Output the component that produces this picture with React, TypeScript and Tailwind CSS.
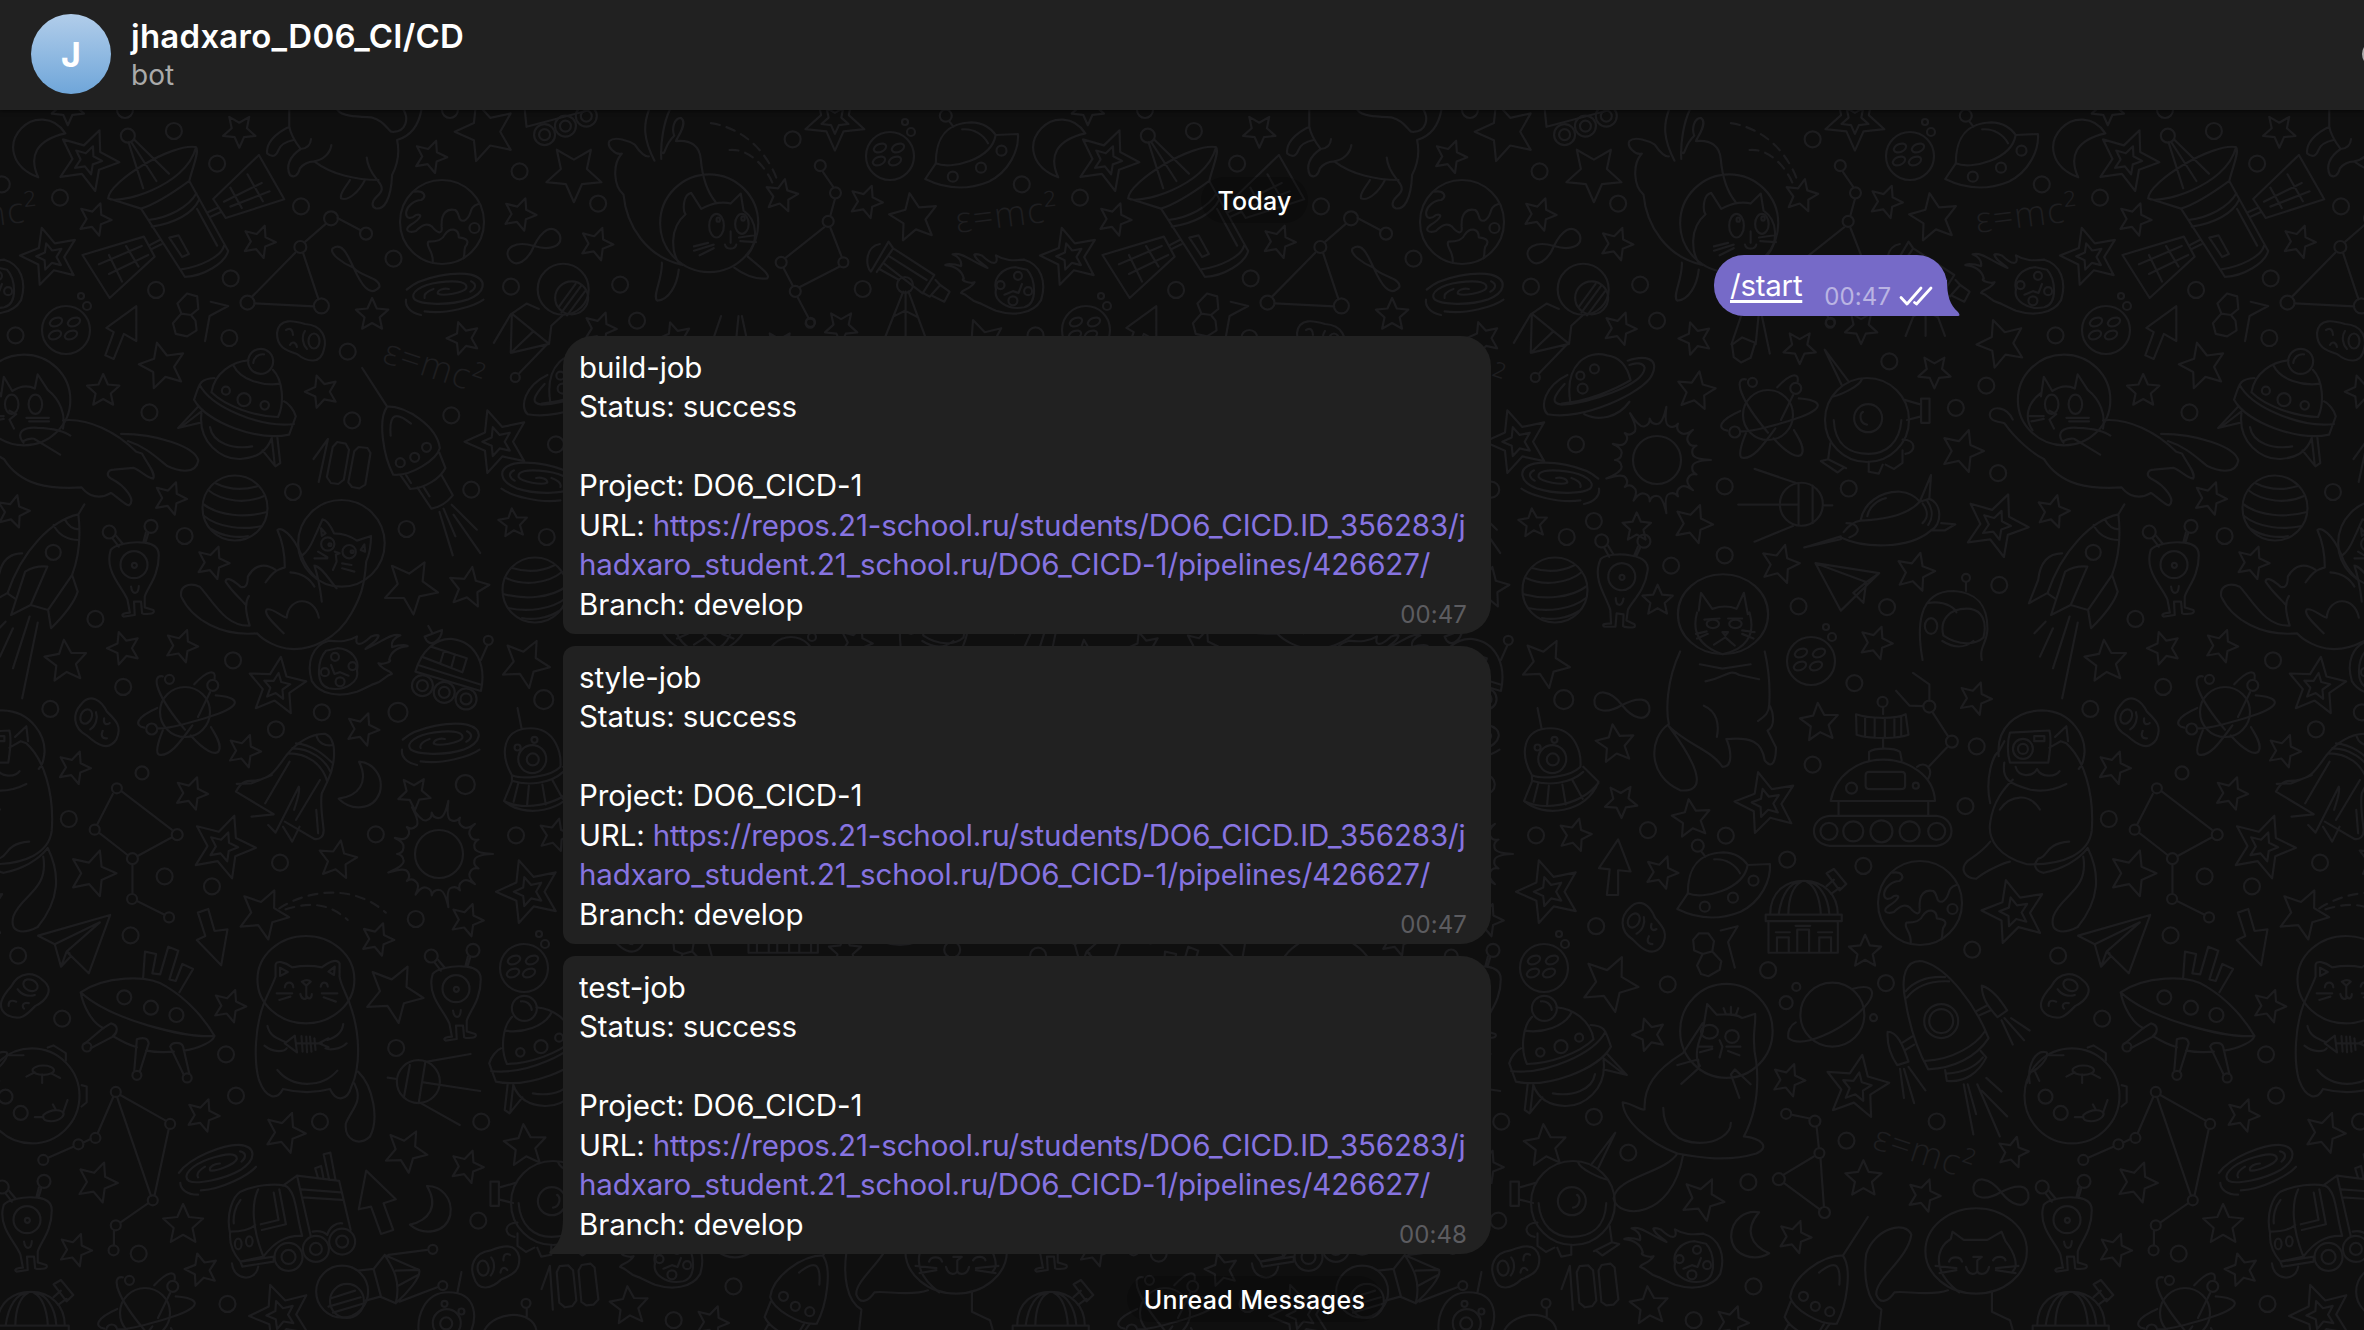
import React from "react";

type Pt = number[];

/* Region: [offsetX, offsetY, scaleX, scaleY] of the grid that a group of doodles is drawn on */
type Grid = [number, number, number, number];

const starPath = (cx: number, cy: number, r: number, rot: number) => {
  const pts: string[] = [];
  for (let i = 0; i < 10; i++) {
    const a = ((rot + i * 36) * Math.PI) / 180;
    const q = i % 2 ? r * 0.47 : r;
    pts.push(`${(cx + Math.sin(a) * q).toFixed(1)} ${(cy - Math.cos(a) * q).toFixed(1)}`);
  }
  return `M${pts.join("L")}Z`;
};

function Region({
  grid,
  circles = [],
  stars = [],
  doubles = [],
  ellipses = [],
  d,
  dashed,
}: {
  grid: Grid;
  circles?: Pt[];
  stars?: Pt[];
  doubles?: Pt[];
  ellipses?: Pt[];
  d: string;
  dashed?: string;
}) {
  const [ox, oy, sx, sy] = grid;
  const X = (x: number) => ox + x * sx;
  const Y = (y: number) => oy + y * sy;
  return (
    <g>
      {circles.map(([x, y, r = 8], i) => (
        <circle key={i} cx={X(x)} cy={Y(y)} r={r} />
      ))}
      {ellipses.map(([x, y, rx, ry], i) => (
        <ellipse key={i} cx={X(x)} cy={Y(y)} rx={rx * sx} ry={ry * sy} />
      ))}
      {stars.map(([x, y, rot, r = 17], i) => (
        <path key={i} d={starPath(X(x), Y(y), r, rot)} />
      ))}
      {doubles.map(([x, y, rot, r], i) => (
        <path key={i} d={starPath(X(x), Y(y), r, rot) + starPath(X(x), Y(y), r * 0.46, rot)} />
      ))}
      <g transform={`translate(${ox} ${oy}) scale(${sx} ${sy})`}>
        <path vectorEffect="non-scaling-stroke" d={d} />
        {dashed && <path vectorEffect="non-scaling-stroke" strokeDasharray="9 7" d={dashed} />}
      </g>
    </g>
  );
}

function Place({ at, rot = 0, flip = false, children }: { at: Pt; rot?: number; flip?: boolean; children: React.ReactNode }) {
  return <g transform={`translate(${at[0]} ${at[1]}) rotate(${rot}) scale(${flip ? -1 : 1} 1)`}>{children}</g>;
}

function Shape({ o, s, d, circles = [] }: { o: Pt; s: Pt; d: string; circles?: Pt[] }) {
  return (
    <>
      {circles.map(([x, y, r], i) => (
        <circle key={i} cx={(x - o[0]) * s[0]} cy={(y - o[1]) * s[1]} r={r} />
      ))}
      <g transform={`scale(${s[0]} ${s[1]}) translate(${-o[0]} ${-o[1]})`}>
        <path vectorEffect="non-scaling-stroke" d={d} />
      </g>
    </>
  );
}

const S1 = [0.3571, 0.3333];
const S2 = [0.3699, 0.3333];
const S3 = [0.5638, 0.3571];
const S4 = [0.5638, 0.4273];

const Galaxy = () => (
  <Shape o={[1250, 880]} s={S1} d="M1140 870C1180 830 1280 815 1320 825C1370 840 1360 880 1310 900C1260 918 1180 915 1163 900C1145 880 1180 855 1230 848C1290 840 1310 850 1307 865C1300 880 1240 890 1227 882C1225 870 1245 865 1258 868M1320 845C1340 855 1330 870 1318 876M1190 895C1185 880 1205 872 1215 868M1138 900C1135 920 1150 940 1180 946M1190 935C1250 945 1330 920 1355 900" />
);
const Globe = () => (
  <Shape o={[1238, 666]} s={S1} circles={[[1238, 666, 42], [1329, 684, 5]]} d="M1160 575C1190 570 1195 590 1180 600C1160 600 1140 620 1138 635C1135 655 1150 660 1165 645C1185 640 1180 655 1150 675C1130 690 1145 700 1165 693C1185 670 1200 670 1210 680C1225 700 1240 705 1237 680C1235 640 1250 625 1275 630C1290 640 1280 665 1300 662C1325 650 1310 620 1340 612M1212 788C1215 750 1190 740 1200 725C1225 725 1240 720 1245 705C1260 680 1285 685 1285 712C1310 715 1315 725 1303 740C1298 760 1303 760 1298 775" />
);
const Meteor = () => (
  <Shape o={[950, 515]} s={S3} circles={[[989, 492, 4], [1007, 535, 4], [980, 562, 4.5], [958, 518, 4]]} d="M1000 447C1030 460 1040 510 1030 560C1015 600 980 605 950 590C935 580 925 570 915 565M985 468C960 470 945 500 950 530C945 560 970 590 1000 580C1025 570 1020 500 1005 475ZM1000 447C980 450 965 450 950 435C955 460 945 465 925 435C915 430 910 430 912 435C915 450 925 455 935 470C905 450 890 425 873 432C885 440 890 450 888 465C870 455 860 460 860 462C880 465 890 480 893 500C885 505 905 515 912 510C905 530 890 530 888 540C900 545 905 560 915 565M965 545L980 535L990 540L996 515" />
);
const Atom = () => (
  <Shape o={[500, 1175]} s={S2} circles={[[500, 1175, 25], [458, 1077, 4.5], [575, 1095, 5.5], [410, 1226, 5.5]]} d="M440 1068C405 1062 425 1130 500 1228M525 1092C560 1050 585 1045 580 1075M583 1125C640 1130 660 1150 590 1180C540 1200 450 1228 425 1224M425 1163C370 1190 360 1215 390 1222M440 1230C425 1270 420 1300 430 1303C460 1310 490 1260 520 1215M515 1245C550 1290 585 1310 592 1290C600 1270 580 1240 570 1220M568 1115L535 1190" />
);
const Alien = () => (
  <Shape o={[363, 750]} s={S2} circles={[[363, 734, 13.5], [364, 736, 2.5], [296, 636, 6.5], [409, 619, 6.5]]} d="M300 690C310 675 350 665 380 667C410 668 430 680 430 705C430 770 400 800 392 830V862L415 870C420 878 415 882 390 882L385 880L382 845L363 845L365 885L335 890C328 885 330 880 352 878L345 838C330 800 290 760 297 705ZM355 800C358 825 375 825 376 798M305 655L322 680M315 648L333 672M402 638L394 668M388 668L395 638" />
);
const Potato = () => (
  <>
    <path d="M-24 -8C-22 -24 -6 -20 4 -17C22 -16 26 -2 23 8C20 24 6 21 -4 13C-16 9 -24 6 -24 -8ZM4 -10C0 -4 2 4 6 8M-15 -11C-10 -14 -8 -10 -8 -6M-11 4C-9 0 -5 1 -4 6" />
    <ellipse cx="13" cy="0" rx="5.5" ry="7.5" />
  </>
);
const ButtonPlanet = () => (
  <>
    <circle r="24" />
    <circle cx="21" cy="-24" r="4" />
    <circle cx="15" cy="-34" r="3" />
    {[[-10, -8], [8, -8], [-11, 5], [5, 5]].map(([x, y], i) => (
      <ellipse key={i} cx={x} cy={y} rx="6.5" ry="4" transform={`rotate(-22 ${x} ${y})`} />
    ))}
  </>
);
const Saucer = () => (
  <Shape o={[700, 165]} s={[0.5867, 0.3333]} circles={[[657, 47, 6], [669, 230, 5], [717, 203, 5], [752, 152, 5]]} d="M640 190C640 130 650 70 700 67C720 67 735 85 742 105L780 102C782 150 765 215 730 245C695 270 660 270 622 237L640 190C665 210 735 180 742 105M663 64L670 80M685 88C705 85 722 105 729 130" />
);
const Infinity2 = () => (
  <path d="M0 0C-14 -14 -28 -12 -28 -1C-27 12 -12 10 0 0C14 -10 27 -12 28 2C26 14 12 12 0 0Z" />
);
const Moon = () => (
  <Shape o={[980, 1400]} s={S2} d="M972 1327C1010 1330 1040 1370 1028 1420C1010 1475 950 1475 917 1438C970 1430 1000 1390 972 1327Z" />
);
const StripedPlanet = () => (
  <>
    <circle r="32.5" />
    <path d="M-20 -25C-6 -18 10 -18 23 -22M-27 -18C-12 -6 12 -4 29 -12M-32 -4C-16 8 10 10 32 4M-31 8C-16 20 8 22 27 18M-24 21C-12 29 4 30 13 28" />
  </>
);
const Sun = () => {
  const parts: string[] = [];
  for (let i = 0; i < 18; i++) {
    const a = (i * 20 * Math.PI) / 180;
    const b = ((i * 20 + 10) * Math.PI) / 180;
    const c = ((i * 20 + 20) * Math.PI) / 180;
    const R = i % 4 === 0 ? 54 : i % 2 ? 42 : 47;
    const p = (t: number, r: number) => `${(Math.sin(t) * r).toFixed(1)} ${(-Math.cos(t) * r).toFixed(1)}`;
    if (i === 0) parts.push(`M${p(a, 36)}`);
    parts.push(`Q${p(b - 0.02, 36)} ${p(b, R)}Q${p(b + 0.02, 36)} ${p(c, 36)}`);
  }
  return (
    <>
      <circle r="24" />
      <path d={parts.join("")} />
    </>
  );
};
const EyeRobot = () => (
  <Shape o={[687, 895]} s={S3} circles={[[687, 895, 42], [689, 890, 14]]} d="M628 895C630 970 660 990 690 990C720 990 745 960 748 895M680 872C672 880 675 905 687 908M643 800L612 698L655 788M625 830C640 825 675 800 678 780M752 838L783 852V885L758 895M783 835H798V903H783ZM622 960L618 1005L650 1030M618 1005L605 1010L635 1042L645 1030M690 1012V1040L708 1045L715 1020M720 1020L735 1032L750 1015V980M750 950C775 950 775 985 755 990" />
);
const HatShip = () => (
  <Shape o={[660, 265]} s={S2} circles={[[705, 125, 12.5], [611, 213, 4], [660, 240, 6.5], [716, 257, 4.2]]} d="M572 218C580 160 630 125 672 122M738 150C765 180 770 250 752 292C690 290 610 260 572 218M632 138C650 180 710 200 758 192M580 175C540 178 540 190 525 240C560 310 700 365 782 345L800 290C795 270 780 250 768 245M540 195C570 260 700 325 795 313M545 280C535 370 600 420 650 418C690 415 720 400 735 355M568 322C575 370 630 390 682 380M535 262L482 325L545 308M545 275L490 322M710 392L745 440L758 430L750 352M735 355L743 435M685 130C687 112 700 102 714 104" />
);
const Rocket = () => (
  <Shape o={[1110, 370]} s={S2} circles={[[1152, 383, 4.5], [1120, 413, 4.5], [1081, 429, 4.5]]} d="M978 145L1045 260M1045 262C1020 300 1035 410 1062 465C1110 470 1180 420 1188 385C1180 320 1100 260 1045 260M1055 348C1050 280 1070 275 1110 312M1082 467L1108 508C1150 505 1190 475 1203 445L1187 400M1127 503L1165 567C1190 562 1210 545 1223 527L1192 465M1097 467L1110 490M1143 500L1160 530M1187 577L1223 707M1198 567L1230 650M1220 555L1288 630M1225 585L1297 700" />
);
const Hundred = () => (
  <Shape o={[925, 430]} s={S2} d="M848 418L887 358L862 487M912 367L935 372L944 390L930 480L915 493L895 490L884 472L900 382ZM970 382L994 385L1002 400L988 495L972 506L952 502L942 488L958 395Z" />
);
const DomeAlien = () => (
  <Shape o={[140, 260]} s={S4} circles={[[128, 232, 14], [129, 233, 6], [132, 187, 3], [102, 205, 3]]} d="M109 160L102 113M92 270C70 220 75 160 125 160C170 160 180 220 178 250C160 275 110 280 92 270L92 285L78 330C110 370 190 360 210 285L183 250M92 283C120 295 160 290 183 262M78 330C110 352 175 345 210 288M103 290L95 332M122 295L119 338M146 292L152 338M164 282L182 325" />
);
const Observatory = () => (
  <Shape o={[575, 600]} s={S4} d="M515 597C515 540 545 518 575 518C610 518 635 550 635 597M530 597C535 550 550 520 570 520M547 597C548 560 555 530 570 520M605 597C603 560 595 530 580 520M620 597C618 550 600 525 585 520M507 597H642V612H507ZM512 612V686H635V612M527 686V650H548V686M563 686V632H584V686M602 686V650H623V686M525 638H550M560 623H586M600 638H625M615 530L628 515M623 548L638 534M615 500L628 490L650 525L638 540Z" />
);
const Formula = () => (
  <text className="font-['Open_Sans'] text-[36px] font-light" fill="#1e1e20" stroke="none" textLength="102">
    ε=mc²
  </text>
);

const GA: Grid = [0, 0, 0.3571, 0.3333];
const GB: Grid = [0, 320, 0.3699, 0.3333];
const GC: Grid = [0, 820, 0.3699, 0.3333];
const GD: Grid = [460, 100, 0.5638, 0.3571];
const GE: Grid = [460, 660, 0.5638, 0.4273];
const GF: Grid = [560, 100, 0.5867, 0.3333];

function Tile() {
  return (
    <g id="space-tile">
      <Region
        grid={GA}
        circles={[[350, 330], [487, 393], [608, 491], [168, 593], [843, 619], [1102, 776], [646, 835], [437, 870], [1260, 330], [1455, 514], [1431, 860], [5, 553], [358, 407, 7], [927, 655, 7], [1025, 701, 6], [841, 741, 6], [693, 908, 7], [900, 918, 7.5]]}
        stars={[[670, 392, 180], [265, 658, 20], [725, 725, 20], [1205, 470, 20], [1455, 643, 20], [1042, 945, 0], [1360, 395, -18, 31], [190, 325, 180]]}
        doubles={[[245, 480, 22, 32], [140, 770, -16, 30]]}
        d="M183 400C150 345 90 350 60 385C20 430 30 500 107 532C80 470 100 420 183 400ZM303 595C305 545 480 430 548 441C560 450 540 500 530 543C470 590 430 615 395 626ZM303 595C330 615 520 560 548 445M360 427L401 565M368 427L438 543M377 420L473 521M395 626L518 831C570 828 630 790 639 753L530 543M415 660C470 655 530 620 550 580M425 680C490 670 540 640 557 600M508 808C560 800 620 770 627 738M552 627L608 737M474 713L500 706L529 762L510 771ZM597 597L725 465L796 598L632 654ZM693 523L736 604M645 563L677 624M627 605L733 549M645 620L755 574M582 637L613 622M590 650L620 635M231 765L403 710L433 770L307 894ZM353 738L388 800M305 765L342 845M277 793L397 738M305 822L415 765M420 735L447 720M425 747L452 733M810 330V380C770 400 745 430 748 460C765 475 775 465 780 450C785 435 800 425 822 420M810 380C815 410 830 430 842 447C865 445 870 430 871 417M842 447C810 470 800 500 812 525C825 535 835 525 840 505C850 490 865 485 880 484M928 435C925 460 905 480 880 484C930 525 1000 540 1060 540M1027 473C1030 510 1050 530 1060 545C1075 565 1070 575 1055 590C1040 605 1040 620 1052 625C1075 630 1095 600 1098 525C1115 490 1120 460 1112 420C1160 405 1175 360 1180 330M945 330C960 350 1000 350 1040 352C1070 360 1080 380 1095 395C1140 400 1145 350 1130 330M980 540C970 560 950 580 955 595C975 605 1005 575 1022 540M945 654L1010 691M913 671L855 725M827 758L706 890M849 760L892 898M713 910L880 919M990 803C960 790 920 760 932 745C960 725 975 770 990 803C1010 830 1070 835 1062 862C1035 895 1010 850 990 803"
      />
      <Region
        grid={GB}
        circles={[[42, 46], [404, 277], [620, 54], [940, 95], [952, 301], [1220, 286], [1274, 509], [792, 516], [499, 648], [1099, 627], [1478, 651], [1503, 373], [258, 897], [333, 1101], [630, 1021], [136, 1167], [746, 1228], [870, 1177], [1076, 1177, 9.5], [1470, 1139, 9.5], [384, 1359, 6.5], [1258, 1394, 9.5], [144, 697, 7.5], [316, 1405, 5], [1320, 961, 4.5], [1142, 1097, 10.5], [1142, 1097, 5.5], [1201, 1117, 10.5], [1201, 1117, 5.5], [1260, 1137, 10.5], [1260, 1137, 5.5]]}
        ellipses={[[923, 670, 117, 130], [886, 672, 18, 20], [944, 695, 18, 20], [892, 674, 4, 4], [952, 695, 4, 4]]}
        stars={[[279, 213, 0], [460, 535, 20], [575, 728, 20], [870, 215, -18], [1253, 55, -18], [1387, 610, -5, 15], [335, 985, -18], [490, 978, 20], [660, 1293, 20], [980, 1228, 20], [200, 1343, 20], [517, 1420, 20], [1120, 1420, 178], [440, 138, -14, 24], [1267, 803, 10, 21], [178, 1025, -5, 22], [1110, 800, 30, 28], [1420, 1030, 27, 25], [35, 575, 15]]}
        doubles={[[1345, 365, -18, 33], [748, 1100, 8, 30]]}
        d="M212 583L228 553M212 583C140 600 60 690 20 820L40 835M60 700C20 700 0 730 -5 780L-30 850L22 818M212 585C220 660 210 720 195 765L210 815C200 850 170 890 138 925L130 870L83 855L30 885L68 755C90 740 110 738 128 740L83 855M195 765L130 870M145 615C160 650 190 660 213 660M175 598C185 620 200 628 213 628M80 890L35 1045M102 908L60 1135M35 925L0 1010M15 905L-15 940M815 708C840 690 845 660 855 640L872 598C885 600 895 620 903 640C930 640 950 650 965 662L1003 648C1003 680 1000 700 990 725C985 800 975 830 950 880C910 960 840 990 787 987C750 985 710 960 695 940C600 950 520 900 490 830C485 800 510 785 540 800C580 850 610 920 675 917C665 880 660 850 673 828M750 630C760 620 790 640 815 705C825 740 840 755 855 775M750 630C770 680 770 720 770 742C740 750 730 770 718 787M745 750C720 730 690 730 670 770C670 800 660 805 650 800C620 770 610 775 610 785C630 820 655 840 662 852M785 757C820 760 840 780 850 800M870 845C865 800 860 770 850 737C870 740 890 780 910 805M767 940C740 910 710 880 722 868C740 865 760 890 775 893C780 830 850 825 862 893M905 695L918 700L908 704L910 725L900 750M860 695L885 712M850 715H885M925 730L950 735M925 745L958 755M868 625L880 640L870 648ZM985 673L987 695L975 690ZM1123 1055C1140 990 1180 955 1220 957C1290 965 1315 1040 1300 1113ZM1130 1035L1303 1095M1140 1010L1250 1057L1262 1015L1165 980M1200 993L1190 1030M1230 1003L1220 1043M1300 1020L1318 975M1148 950L1195 930C1195 960 1160 990 1148 950M1158 918L1168 938M638 1415C650 1390 660 1380 690 1382C730 1375 740 1360 775 1305C800 1270 840 1240 880 1242C915 1260 905 1340 885 1385L870 1420C865 1450 870 1480 875 1530C875 1550 865 1560 850 1557L770 1505M638 1415L740 1483M740 1483L680 1490M800 1270C850 1275 880 1310 900 1330M790 1285C840 1285 880 1320 893 1355M780 1300C830 1300 870 1330 885 1385M783 1325L717 1450M865 1380L800 1500M725 1515L745 1538L808 1400C812 1420 800 1450 795 1470M765 1520L790 1565L810 1520M855 1245C860 1270 880 1280 900 1275M305 1422L262 1515M330 1415L465 1530M640 1392L680 1390L735 1365M855 1470L860 1540"
      />
      <Region
        grid={GC}
        circles={[[186, -3], [445, 169], [573, 199], [757, 128], [1016, 43], [1395, 46], [353, 346], [49, 407], [168, 596], [611, 703], [638, 827], [865, 905], [1071, 684], [1124, 297], [1301, 905], [1293, 1202], [375, 1301], [615, 1452], [256, 29, 5], [479, 44, 5.5], [358, 116, 5.5], [357, 237, 5], [457, 292, 5], [313, 816, 5], [460, 912, 5], [413, 1141, 5], [258, 954, 5], [212, 973, 5], [117, 1020, 5], [313, 1216, 5], [307, 1291, 5], [336, 532, 7], [408, 563, 7], [477, 585, 7], [235, 681, 4.5], [370, 766, 4.5], [506, 774, 4.5], [780, 1311, 14], [780, 1311, 7], [854, 1287, 13], [854, 1287, 6], [925, 1265, 13], [925, 1265, 6], [925, 1415, 26], [938, 1443, 17], [1170, 1288, 4.5], [1197, 1397, 4.5], [1422, 1450, 4.5], [1131, 785, 21.5]]}
        ellipses={[[827, 479, 131, 131], [644, 1272, 9, 16], [674, 1264, 9, 15]]}
        stars={[[250, 160, 18, 24], [912, 120, 10, 20], [770, 938, 20, 21], [262, 1087, 20, 21], [495, 1215, 0, 21], [1097, 993, 28, 22], [1420, 978, -5, 22], [1020, 358, 20], [620, 558, 20], [1262, 300, 20], [548, 886, 20], [203, 1290, 20], [1262, 1040, 20], [545, 1350, -15], [1500, 45, 15], [712, 282, 25, 26], [1065, 520, 27, 30]]}
        doubles={[[603, 80, 20, 33], [1430, 215, -18, 33], [760, 1485, -20, 32]]}
        dashed="M755 265C840 205 960 195 1043 278M772 268C840 245 890 250 940 300"
        d="M270 40L345 105M465 52L372 108M358 133V222M370 243L445 284M325 825L448 902M317 833L408 1127M456 928L418 1125M306 832L264 940M245 957L224 968M198 980L130 1013M400 1150L326 1207M308 1232V1276M535 278L563 267L580 333L615 328L598 436L532 360L555 348ZM990 1052L1070 1138L1037 1150L1063 1230L1030 1242L1003 1160L970 1168ZM103 347L298 285L240 460L180 395L165 440L148 373ZM148 373L270 307L180 395L188 400M165 440L192 408M218 517C280 470 400 460 450 500C510 540 555 600 580 648C500 655 300 600 218 517ZM218 517C225 560 250 610 280 625M305 648C330 665 350 675 370 682M395 692C420 697 450 697 470 695M497 692C540 685 575 665 580 648M278 625L300 610C320 615 320 635 305 650L245 685M278 625L228 672M370 658C390 650 400 655 402 670L378 755M370 658L363 752M460 680C465 665 490 665 495 680L512 762M460 680L497 765M387 472L392 395L422 402L412 460L433 463L455 380L482 392L458 478L475 483L493 432L522 447L485 517M745 470C735 500 720 530 712 555C690 620 685 720 700 780C720 840 750 840 765 807C810 820 850 820 892 807C910 850 940 840 950 800C975 740 975 640 945 550C935 520 920 490 918 470V430C910 415 890 425 870 442C840 435 810 438 790 442C770 425 745 420 745 435ZM757 443L778 456L757 468ZM905 440L888 455L903 465ZM770 502C772 483 792 483 793 502M867 500C870 483 885 485 886 500M816 485C825 480 835 480 840 485L828 497ZM828 497V530M812 522C815 540 828 540 830 530C835 540 843 535 843 522M748 520H790M755 540L785 530M870 520H912M875 532L908 545M723 618C730 650 750 655 770 665M715 677C740 700 770 695 775 685M928 612C925 645 900 655 885 660M937 670C920 690 890 690 880 685M770 670L797 647L803 697ZM803 670H870M815 648L818 695M828 650L830 697M838 650L842 695M850 655L853 690M888 655L862 670L888 682M750 750C790 805 870 805 912 752M968 755C1010 800 1025 900 1000 950C970 980 930 960 935 910C950 870 975 850 965 810L958 790M622 1240C610 1180 630 1130 650 1115C690 1095 740 1090 770 1097C800 1110 800 1180 817 1248C770 1245 740 1270 712 1310L650 1325C630 1300 620 1270 622 1240M698 1108C680 1150 680 1220 712 1310M622 1235C660 1235 680 1225 690 1215M650 1140C635 1160 630 1190 632 1210M740 1118L753 1200L705 1213M755 1108L773 1213L708 1230M765 1097L803 1067L917 1083L948 1230M803 1067L840 1248M815 1108L922 1117M818 1132L925 1140M852 1045L868 1038L875 1077L860 1075ZM875 1003L893 998L907 1080L890 1080ZM650 1325L740 1310V1325L655 1340ZM627 1330C630 1380 690 1390 698 1340M845 1235C870 1230 880 1240 885 1245C890 1220 910 1208 925 1210M895 1435L960 1412M888 1460L975 1432M900 1478L985 1450M968 1352L1010 1347L1040 1305L1133 1350C1140 1370 1100 1420 1070 1450L1028 1430L988 1442M1010 1347L1030 1430M1040 1305C1060 1340 1085 1380 1070 1450M1070 1352L1133 1350M1075 1398L1130 1365M1050 1305L1155 1290M1080 1445L1182 1402M1310 1530C1340 1470 1440 1470 1450 1530M1424 1490V1465M1048 773L1073 777M1155 725L1272 702M1145 787L1298 813M1135 848L1243 915M1108 735L1092 832M1150 725L1132 848"
      />
      <Region
        grid={GD}
        circles={[[590, 110], [245, 290], [284, 517], [314, 618], [726, 732], [898, 800], [844, 862], [621, 625, 4.5], [919, 1045], [654, 1088], [434, 1082], [202, 1179], [434, 1275], [339, 1304], [921, 1358], [565, 1418], [722, 1420], [639, 184, 5.5], [666, 260, 5.5], [653, 340, 5.5], [203, 753, 4.5], [178, 772, 4], [182, 808, 5], [98, 777, 4.5], [183, 530, 25.5], [198, 554, 16.5], [570, 1132, 21.5], [862, 1338, 4], [150, 97, 10.5], [150, 97, 5.5], [187, 73, 10.5], [187, 73, 5.5], [224, 45, 10.5], [224, 45, 5.5]]}
        ellipses={[[442, 345, 87, 137], [455, 352, 13, 33], [500, 347, 12, 28], [458, 335, 3, 6], [502, 332, 3, 6], [431, 1440, 80, 112], [413, 1467, 11, 12], [453, 1467, 11, 12], [1036, 840, 82, 127], [1014, 852, 12, 27], [1056, 852, 12, 27], [800, 1473, 11, 22]]}
        stars={[[570, 268, 12], [720, 285, 20], [242, 403, 20], [248, 640, 20], [382, 668, -18], [567, 692, 180], [676, 636, 180], [806, 760, 180], [383, 815, 10, 20], [855, 983, 18, 22], [378, 1187, 20, 20], [532, 1300, 15, 20], [278, 1197, 0, 15], [772, 1322, 15, 20], [315, 1402, 0, 16], [702, 1520, 20], [202, 205, 180, 29], [805, 330, -10, 25], [925, 682, -20, 25]]}
        doubles={[[665, 55, 180, 31], [915, 1190, 22, 33]]}
        dashed="M445 65C510 80 550 160 565 235M478 140C510 135 540 180 555 235"
        d="M410 260C395 265 395 310 400 320C370 360 375 430 390 460M410 260L428 305C450 285 470 285 480 290L498 262L503 310C530 340 528 400 510 434M480 368V400M470 405C472 420 488 420 490 405M415 410L440 400M415 422L450 405M425 435L450 415M495 385L525 378M497 395L525 398M287 150C270 180 272 240 290 265C295 350 330 440 395 462M265 115C260 130 275 155 287 150M265 115C275 100 300 115 310 125C320 150 330 160 335 158M335 28C325 70 325 110 345 170M372 28C362 60 355 120 357 165M380 100C360 130 365 160 357 145M380 100C375 80 380 50 392 50C405 65 385 105 383 115C410 110 425 130 427 165C430 220 440 260 453 285M358 455C360 500 340 550 350 562C370 560 385 520 388 475M643 200L662 243M665 277L657 323M463 605L446 684M494 605L489 684M500 605L514 710M465 665L447 685L450 720L463 735L480 722L488 680ZM160 845C150 740 190 700 225 715C250 720 262 750 267 785C240 810 190 845 145 850M155 770C115 800 105 860 120 880C180 900 290 820 305 770C320 720 290 715 262 730M150 795C130 830 125 850 145 853C190 850 290 800 292 750C290 735 275 735 265 742M185 880C210 900 245 890 265 845M140 585L118 570L92 598L158 683L162 632L182 603M92 598L90 708L158 683M90 600L60 680M92 705L130 648M155 683L105 765M175 580L205 515M180 595L215 520M190 603L222 535M645 1210C655 1190 665 1180 675 1178C680 1130 710 1095 745 1097C765 1100 775 1115 780 1125C760 1160 720 1175 675 1178M780 1125L800 1050L797 1115M575 1253L640 1222V1230ZM640 1225C680 1255 760 1260 800 1205C820 1190 820 1130 797 1117L780 1125M785 1130C795 1150 795 1170 785 1185M793 1122C805 1150 803 1170 795 1190M650 1185C670 1185 680 1210 655 1225M800 1205H825L843 1188L818 1185M687 1165C690 1140 705 1120 720 1115M487 1033L562 1073M458 1133H565M487 1237L555 1193M610 1135H625M565 1073V1190M590 1080V1185M388 1430L392 1380L412 1425C430 1415 445 1418 455 1425L468 1380L475 1440M385 1435C375 1490 390 1530 430 1552C470 1540 490 1500 478 1435M398 1455L425 1452M440 1452H465M415 1525L435 1505L452 1528M430 1490H440L435 1500ZM383 1495L402 1488M385 1508L404 1495M465 1485L487 1490M465 1495L485 1508M595 1297L708 1325L640 1430ZM595 1297L685 1350L708 1325M685 1350L680 1408L662 1380L685 1350M785 1568C775 1480 775 1375 840 1375C890 1380 900 1430 900 1480C900 1520 885 1530 890 1568M870 1425C830 1420 815 1460 822 1500C850 1530 880 1525 893 1505C900 1460 890 1430 870 1425M795 1408C830 1400 845 1430 845 1435M862 1375V1350M820 1515C840 1535 860 1535 875 1515M995 830L1000 775L1015 815C1030 800 1045 800 1055 808L1060 768L1078 812C1100 840 1110 880 1105 920M995 820C970 850 965 890 980 925M1010 870L1022 880L1010 895L1018 920M975 885H1000M978 900L1000 893M1040 890H1080M1045 900H1080M1035 960C1020 930 1035 915 1060 918C1090 920 1110 930 1118 940M1035 955C1045 945 1055 948 1055 950L1100 993M945 895C935 860 910 855 905 875C900 900 920 900 930 905C950 950 980 990 1000 1005C1030 1080 1080 1090 1138 1085C1150 1110 1170 1120 1190 1100C1200 1110 1215 1135 1222 1135C1235 1120 1215 1080 1190 1060C1180 1050 1185 1035 1195 1035L1230 1030C1245 1040 1255 1060 1265 1060C1270 1045 1255 1020 1245 990L1235 985C1200 930 1150 890 1105 897M1208 935C1270 935 1340 970 1345 1010C1340 1050 1310 1040 1290 1025C1270 1000 1250 970 1220 955M1235 577V675L1213 655L1195 725L1180 715L1195 650L1182 638ZM1325 542L1343 550L1345 585L1332 602L1315 598L1308 570ZM1315 598L1300 625L1305 655L1325 662L1342 645L1340 618L1332 602M1367 565L1398 577L1365 605L1357 675M115 30L118 75L225 30"
      />
      <Region
        grid={GF}
        circles={[[377, 487, 5.5], [483, 487, 5], [401, 574, 5.5], [427, 667, 4.5], [516, 567], [588, 555]]}
        d="M450 382L385 473M461 384L480 470M476 500L408 562M381 504L397 558M405 592L423 652M545 432C520 440 520 500 530 515L560 425L568 445L540 516M568 445L638 525L618 580L553 492M562 470L625 540M640 540L648 555L630 590L620 580M648 555L664 575L655 605L635 588M545 508L578 540M585 575L555 708M589 575V708M594 575L622 708M568 650L588 632L610 652M320 470C340 500 360 525 353 535C330 540 310 520 297 503"
      />
      <Region
        grid={GE}
        circles={[[664, 54], [881, 202], [590, 245], [861, 342], [436, 411], [298, 398], [545, 467], [680, 482], [206, 623], [333, 759], [511, 726], [720, 756], [873, 678], [202, 1069], [263, 1153], [476, 1222], [650, 1125], [810, 1080], [485, 1466], [379, 1545], [543, 1062, 5], [594, 1079, 5.5], [602, 1154, 5], [530, 1215, 6], [611, 1293, 5.5], [714, 98, 5], [619, 401, 8.5], [662, 401, 10], [712, 401, 11], [762, 401, 10], [810, 401, 8.5], [659, 300, 5.5], [773, 294, 3], [797, 109, 6], [837, 191, 6], [625, 830, 32], [561, 765, 4], [543, 802, 6.5], [698, 837, 3.5], [818, 845, 17], [818, 845, 12], [1050, 1020, 47.5], [1003, 1022, 7], [1030, 1060, 7], [963, 208, 10], [963, 208, 5]]}
        ellipses={[[437, 868, 82, 110], [407, 870, 15, 16], [447, 881, 12, 15], [880, 1383, 90, 100], [1070, 960, 19, 11]]}
        stars={[[878, 90, 20], [250, 330, 178], [322, 497, 20], [683, 683, 0], [300, 877, -18], [547, 983, 20], [558, 1350, 20], [787, 1253, 20], [945, 1152, 15, 16], [447, 1550, 20], [602, 147, -5, 20], [240, 197, -8, 20], [375, 372, -8, 20], [680, 1215, 0, 19], [395, 1262, 25, 22], [300, 1512, -5, 20], [230, 757, 25, 29]]}
        doubles={[[508, 335, -15, 32], [668, 1000, 10, 33], [948, 590, -15, 33]]}
        d="M355 -20C330 50 330 120 335 150C300 180 295 270 355 305C395 310 400 270 335 155C370 200 410 210 430 250C450 250 445 210 437 185C480 180 500 190 505 235C520 260 525 230 525 205L510 165C525 155 520 120 513 105C515 60 512 20 505 -20M397 107C420 120 425 150 420 180M513 105C512 130 500 135 493 143M390 10L430 20L480 10M400 50C440 40 440 20 460 35L495 45M245 420L267 495L245 492V550H225L230 490L211 487ZM622 330C630 270 670 233 715 233C760 233 805 270 807 330ZM636 330V363M795 330V363M620 365H810C845 370 845 430 810 435H620C583 430 583 370 620 365ZM690 235V215C700 205 735 205 745 215L748 235M715 207V182M667 127C690 138 740 138 755 127L760 175C740 185 690 185 668 175ZM683 133V180M700 135V182M718 136V182M735 135V180M747 132V178M715 127V110M690 262H748Q754 262 754 270V294Q754 302 746 302H692Q684 302 684 294V270Q684 262 690 262M775 250C790 235 805 255 795 278M797 248L828 205M830 178L803 123M785 108L762 107L738 72M797 95V57L768 30M660 770C700 755 705 780 680 815C640 870 570 910 547 885C545 870 550 855 560 848M755 800C745 740 755 700 785 705C830 720 880 810 902 885C880 930 840 955 795 958C770 900 760 840 755 800M757 790C775 760 800 750 832 752M755 775C775 745 800 740 825 742M790 938C840 935 880 900 895 870M825 960L828 985C860 990 885 965 898 930L888 915M828 968C860 965 880 950 892 930M723 870C740 870 750 900 760 940L740 948C725 920 722 890 723 870M750 895L768 880M755 912L770 900M890 762C910 770 925 800 935 820L918 836C900 810 890 790 890 762M880 822L900 808M885 832L905 820M745 957L752 1025M752 957L770 1037M760 952L790 1007M858 993L875 1110M865 993L880 1063M882 993L922 1115M890 1008L935 1068M898 978L925 1010M925 843L945 900M930 838L965 890M942 838L975 867M1078 907L1088 902L1110 920V938M1138 995L1147 998V1035L1138 1045M975 990C970 950 985 910 1005 918C1010 930 990 960 975 965L970 990M985 965L992 985M1005 925H1035M1055 965L1040 975M1068 970V990M1085 968L1100 978M1070 1065C1090 1045 1115 1055 1103 1070C1090 1085 1070 1080 1070 1070ZM1055 1070H1070M1087 1040L1092 1052M1113 1030L1105 1060M390 950C380 930 385 900 395 870L403 805L420 830C440 828 455 828 465 838L488 828C490 860 480 880 490 940C495 1000 490 1060 468 1115C500 1120 515 1140 490 1155C440 1175 390 1165 350 1155C300 1130 255 1080 253 1035C275 1040 285 1055 292 1052C290 1000 310 960 360 920L395 850M425 890L430 905L425 930M388 905H412M390 918L412 910M437 905H462M440 915L460 925M432 815L436 828M445 812V828M458 815L454 830M357 992L388 955L387 935C370 940 360 945 350 948M460 1025L445 970L452 958L480 993M350 1155C330 1200 240 1210 237 1260C245 1310 340 1310 360 1160M325 1048C325 1100 350 1130 390 1130C420 1130 445 1110 445 1083M552 1064L585 1073M597 1092L601 1142M592 1162L538 1205M604 1167L610 1280M540 1225L602 1285M920 225C915 160 950 118 998 118C1050 120 1075 180 1072 220C1070 240 1068 245 1062 255M940 170L1010 165C1015 190 1010 220 1008 240L940 240C935 220 935 190 940 170ZM983 178H1001V190H983ZM1020 180L1040 155L1043 190M1010 205L1030 190L1040 195C1070 230 1090 310 1085 400C1080 450 1040 480 970 478C920 460 900 420 905 380C910 330 930 300 945 280M905 335C895 280 910 220 920 215L930 190M930 240C925 280 940 290 975 303C1000 310 1025 300 1040 290M950 250C955 275 980 275 988 255C995 275 1020 275 1028 260M922 350C940 315 975 310 993 350M905 425C890 450 875 460 865 470C850 490 860 510 880 512C900 490 930 475 940 472M1045 425C1000 430 1010 460 990 465C980 480 985 495 1000 498C1030 490 1060 470 1078 440C1100 500 1100 560 1060 625C1030 645 1010 635 1017 600C1030 550 1080 540 1070 460M378 655L388 640L405 640L415 658L412 682L395 688L380 680ZM395 688L385 715L392 735L405 740L425 725L428 705L412 682M427 633L457 623L440 660L452 720M815 1390C820 1365 830 1360 835 1355L838 1338L858 1357H900L925 1338L932 1360C950 1390 955 1420 945 1430M815 1390C810 1420 820 1450 850 1480M832 1408C835 1395 852 1395 855 1408M910 1405C915 1393 930 1395 932 1405M875 1397H890L882 1405V1430M862 1420C865 1440 880 1440 882 1430C885 1440 900 1440 903 1420M808 1418L845 1423M815 1435L845 1428M915 1423L955 1418M915 1428L950 1435M830 1475C800 1490 750 1475 735 1480C725 1500 710 1510 703 1485C700 1450 760 1400 765 1345C755 1310 700 1330 685 1390C680 1440 685 1500 712 1520L708 1568M908 1480V1525L940 1545L945 1568"
      />
      <Place at={[446, 293]}><Galaxy /></Place>
      <Place at={[442, 743]}><Galaxy /></Place>
      <Place at={[539, 482]} flip><Galaxy /></Place>
      <Place at={[218, 1168]} rot={-12}><Galaxy /></Place>
      <Place at={[442, 222]}><Globe /></Place>
      <Place at={[900, 903]}><Globe /></Place>
      <Place at={[996, 284]}><Meteor /></Place>
      <Place at={[357, 665]} flip><Meteor /></Place>
      <Place at={[655, 1258]}><Meteor /></Place>
      <Place at={[185, 712]}><Atom /></Place>
      <Place at={[748, 415]}><Atom /></Place>
      <Place at={[145, 1313]}><Atom /></Place>
      <Place at={[134, 570]}><Alien /></Place>
      <Place at={[601, 582]} rot={8}><Alien /></Place>
      <Place at={[456, 994]}><Alien /></Place>
      <Place at={[27, 1225]}><Alien /></Place>
      <Place at={[301, 341]}><Potato /></Place>
      <Place at={[98, 722]} rot={205}><Potato /></Place>
      <Place at={[25, 997]} rot={-65}><Potato /></Place>
      <Place at={[496, 1267]} flip rot={-5}><Potato /></Place>
      <Place at={[625, 927]} rot={210}><Potato /></Place>
      <Place at={[66, 330]}><ButtonPlanet /></Place>
      <Place at={[524, 968]}><ButtonPlanet /></Place>
      <Place at={[890, 156]}><ButtonPlanet /></Place>
      <Place at={[791, 661]}><ButtonPlanet /></Place>
      <Place at={[971, 155]}><Saucer /></Place>
      <Place at={[703, 885]}><Saucer /></Place>
      <Place at={[534, 246]} rot={-28}><Infinity2 /></Place>
      <Place at={[602, 705]} rot={8}><Infinity2 /></Place>
      <Place at={[981, 1192]} rot={8}><Infinity2 /></Place>
      <Place at={[362, 786]}><Moon /></Place>
      <Place at={[432, 1210]} rot={-5}><Moon /></Place>
      <Place at={[730, 1235]} flip rot={15}><Moon /></Place>
      <Place at={[235, 508]}><StripedPlanet /></Place>
      <Place at={[535, 590]} flip><StripedPlanet /></Place>
      <Place at={[637, 460]}><Sun /></Place>
      <Place at={[439, 854]}><Sun /></Place>
      <Place at={[847, 420]}><EyeRobot /></Place>
      <Place at={[553, 1203]} flip><EyeRobot /></Place>
      <Place at={[244, 408]}><HatShip /></Place>
      <Place at={[541, 1055]} flip><HatShip /></Place>
      <Place at={[411, 443]}><Rocket /></Place>
      <Place at={[799, 1292]} flip><Rocket /></Place>
      <Place at={[342, 463]}><Hundred /></Place>
      <Place at={[570, 1285]} rot={-16}><Hundred /></Place>
      <Place at={[539, 771]}><DomeAlien /></Place>
      <Place at={[440, 1335]} flip><DomeAlien /></Place>
      <Place at={[784, 916]}><Observatory /></Place>
      <Place at={[31, 1327]}><Observatory /></Place>
      <Place at={[957, 233]} rot={-7}><Formula /></Place>
      <Place at={[381, 362]} rot={18}><Formula /></Place>
      <Place at={[851, 1148]} rot={18}><Formula /></Place>
    </g>
  );
}

function Wallpaper() {
  return (
    <svg className="absolute inset-0 h-full w-full" viewBox="0 0 2364 1330" fill="none" stroke="#1d1d1f" strokeWidth="2.2" strokeLinecap="round" strokeLinejoin="round" aria-hidden="true">
      <Tile />
      <use href="#space-tile" x="-1020" />
      <use href="#space-tile" x="1020" />
      <use href="#space-tile" x="2040" />
    </svg>
  );
}

const jobs = [
  { name: "build-job", time: "00:47" },
  { name: "style-job", time: "00:47" },
  { name: "test-job", time: "00:48" },
];

function JobMessage({ name, time, first, last }: { name: string; time: string; first: boolean; last: boolean }) {
  return (
    <article
      className={`relative h-[298px] w-[928px] bg-[#212121] px-4 pt-[11.5px] text-[29.5px] leading-[39.5px] tracking-[-0.13px] text-white ${
        first ? "rounded-tl-[30px]" : "rounded-tl-[12px]"
      } rounded-r-[30px] ${last ? "" : "rounded-bl-[12px]"}`}
    >
      <p>{name}</p>
      <p>Status: success</p>
      <p>&nbsp;</p>
      <p>Project: DO6_CICD-1</p>
      <p className="whitespace-nowrap">
        URL:{" "}
        <a className="text-[#8774e1]">
          https://repos.21-school.ru/students/DO6_CICD.ID_356283/j
          <br />
          hadxaro_student.21_school.ru/DO6_CICD-1/pipelines/426627/
        </a>
      </p>
      <p>Branch: develop</p>
      <time className="absolute right-6 bottom-[2px] text-[24px] leading-[34px] tracking-[0.1px] text-[#5c5c60]">{time}</time>
      {last && (
        <svg className="absolute bottom-0 -left-[14px] h-[36px] w-[15px]" viewBox="0 0 15 36" fill="#212121">
          <path d="M15 0H14C14 16 10 26 1 33Q-1 36 2 36H15Z" />
        </svg>
      )}
    </article>
  );
}

export default function App() {
  return (
    <div className="relative flex h-[1330px] w-[2364px] flex-col overflow-hidden bg-[#0f0f0f] font-['Inter',sans-serif]">
      <Wallpaper />
      <header className="relative flex h-[110px] items-center gap-5 bg-[#212121] pl-[31px] shadow-[0_1px_4px_rgba(0,0,0,0.6)]">
        <div className="-mt-[2px] flex size-20 items-center justify-center rounded-full bg-linear-to-b from-[#b1cdea] to-[#6fa6d9] text-[34px] font-bold text-white">J</div>
        <div className="flex-1">
          <h1 className="text-[33px] leading-[40px] font-semibold tracking-[0.25px] text-white">jhadxaro_D06_CI/CD</h1>
          <p className="text-[28px] leading-[38px] text-[#aaaaaa]">bot</p>
        </div>
        <svg className="h-8 w-[2px]" viewBox="0 0 2 32" fill="none" stroke="#aaaaaa" strokeWidth="3">
          <circle cx="13" cy="15" r="11.5" />
        </svg>
      </header>
      <main className="relative flex flex-1 flex-col pr-[404px] pl-[563px]">
        <div className="mt-[67px] ml-[638px] flex h-[46px] w-[107px] items-center justify-center rounded-full bg-black/20 pt-[3px] text-[25px] font-medium tracking-[0.2px] text-white">Today</div>
        <div className="relative mt-8 mr-[13px] flex h-[61px] w-[233px] self-end rounded-l-[30px] rounded-tr-[30px] bg-[#766ac8] pl-4 text-white">
          <a className="mt-[10px] text-[29.5px] leading-[40px] tracking-[-0.25px] underline decoration-[3px] underline-offset-[4px]">/start</a>
          <span className="mt-[25px] ml-[22px] text-[24px] leading-[34px] tracking-[0.1px] text-white/50">00:47</span>
          <svg className="mt-[31px] ml-[8px] h-[20px] w-[34px]" viewBox="0 0 34 20" fill="none" stroke="white" strokeWidth="2.8" strokeLinecap="round" strokeLinejoin="round">
            <path d="M2 11.5L8 18L22 2M15.5 16.5L17.5 18L32 2" />
          </svg>
          <svg className="absolute -right-[13px] bottom-0 h-[36px] w-[14px]" viewBox="0 0 14 36" fill="#766ac8">
            <path d="M0 0H1C1 16 4 25 12 32Q15 36 12 36H0Z" />
          </svg>
        </div>
        <div className="mt-5 flex flex-col gap-3">
          {jobs.map((job, i) => (
            <JobMessage key={job.name} name={job.name} time={job.time} first={i === 0} last={i === jobs.length - 1} />
          ))}
        </div>
        <div className="mt-[22px] ml-[564px] flex h-[46px] w-[255px] items-center justify-center rounded-full bg-black/20 pt-[3px] text-[25px] font-medium tracking-[0.35px] whitespace-nowrap text-white">Unread Messages</div>
      </main>
    </div>
  );
}
